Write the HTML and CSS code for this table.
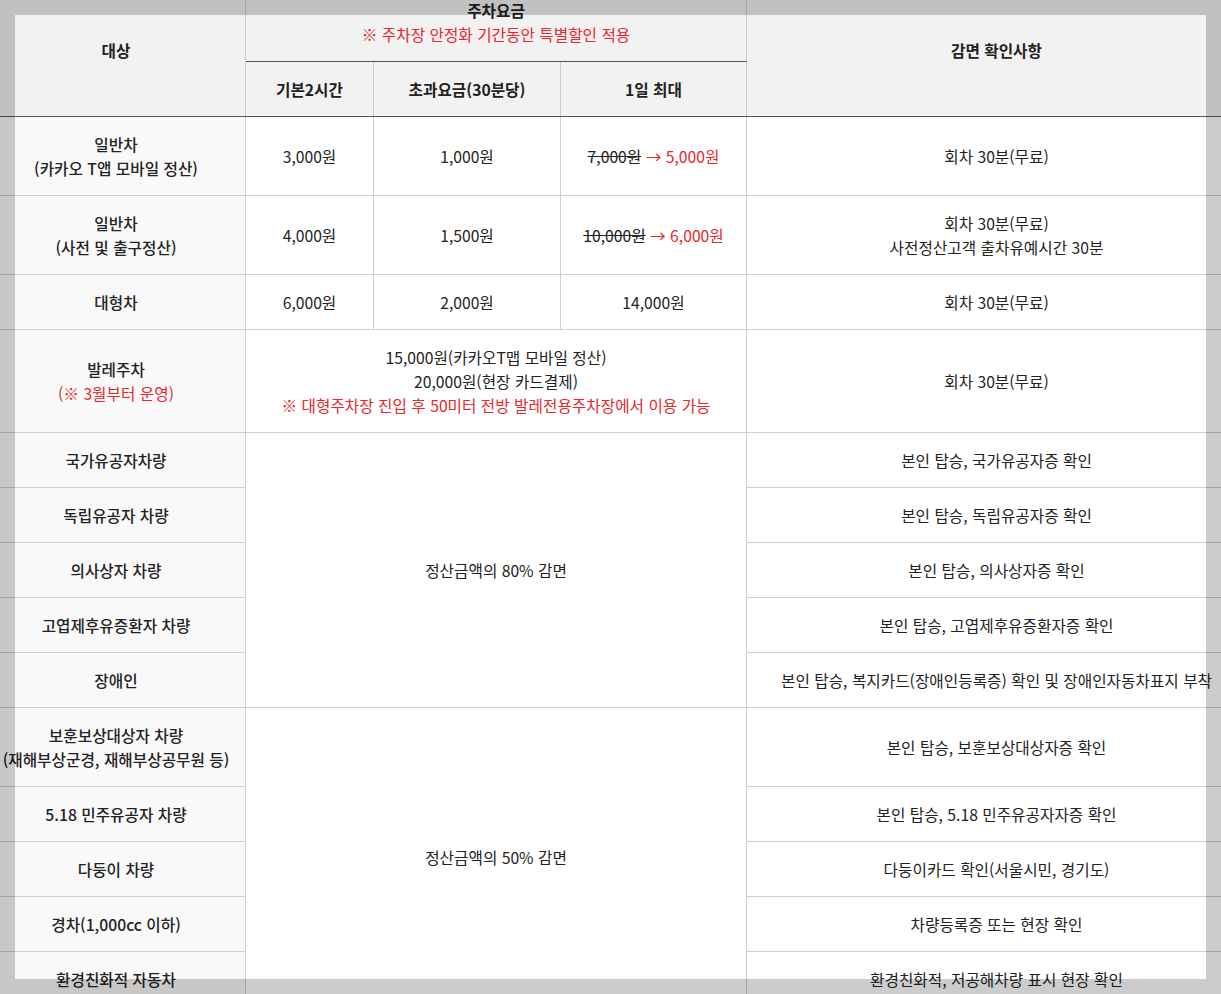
FILE: index.html
```html
<!DOCTYPE html>
<html lang="ko">
<head>
<meta charset="utf-8">
<title>주차요금</title>
<link rel="stylesheet" href="styles.css">
</head>
<body>
<div class="wrap">
<table class="fee">
<colgroup>
<col class="c1"><col class="c2"><col class="c3"><col class="c4"><col class="c5">
</colgroup>
<thead>
<tr>
<th rowspan="2" class="hd-end">대상</th>
<th colspan="3" class="hd-group">주차요금<br><span class="red normal">※ 주차장 안정화 기간동안 특별할인 적용</span></th>
<th rowspan="2" class="hd-end">감면 확인사항</th>
</tr>
<tr>
<th class="hd-end">기본2시간</th>
<th class="hd-end">초과요금(30분당)</th>
<th class="hd-end">1일 최대</th>
</tr>
</thead>
<tbody>
<tr>
<th>일반차<br>(카카오 T앱 모바일 정산)</th>
<td>3,000원</td>
<td>1,000원</td>
<td><s>7,000원</s> <span class="red">→ 5,000원</span></td>
<td>회차 30분(무료)</td>
</tr>
<tr>
<th>일반차<br>(사전 및 출구정산)</th>
<td>4,000원</td>
<td>1,500원</td>
<td><s>10,000원</s> <span class="red">→ 6,000원</span></td>
<td>회차 30분(무료)<br>사전정산고객 출차유예시간 30분</td>
</tr>
<tr>
<th>대형차</th>
<td>6,000원</td>
<td>2,000원</td>
<td>14,000원</td>
<td>회차 30분(무료)</td>
</tr>
<tr>
<th>발레주차<br><span class="red normal">(※ 3월부터 운영)</span></th>
<td colspan="3">15,000원(카카오T맵 모바일 정산)<br>20,000원(현장 카드결제)<br><span class="red">※ 대형주차장 진입 후 50미터 전방 발레전용주차장에서 이용 가능</span></td>
<td>회차 30분(무료)</td>
</tr>
<tr>
<th>국가유공자차량</th>
<td colspan="3" rowspan="5">정산금액의 80% 감면</td>
<td>본인 탑승, 국가유공자증 확인</td>
</tr>
<tr>
<th>독립유공자 차량</th>
<td>본인 탑승, 독립유공자증 확인</td>
</tr>
<tr>
<th>의사상자 차량</th>
<td>본인 탑승, 의사상자증 확인</td>
</tr>
<tr>
<th>고엽제후유증환자 차량</th>
<td>본인 탑승, 고엽제후유증환자증 확인</td>
</tr>
<tr>
<th>장애인</th>
<td>본인 탑승, 복지카드(장애인등록증) 확인 및 장애인자동차표지 부착</td>
</tr>
<tr>
<th>보훈보상대상자 차량<br>(재해부상군경, 재해부상공무원 등)</th>
<td colspan="3" rowspan="5">정산금액의 50% 감면</td>
<td>본인 탑승, 보훈보상대상자증 확인</td>
</tr>
<tr>
<th>5.18 민주유공자 차량</th>
<td>본인 탑승, 5.18 민주유공자자증 확인</td>
</tr>
<tr>
<th>다둥이 차량</th>
<td>다둥이카드 확인(서울시민, 경기도)</td>
</tr>
<tr>
<th>경차(1,000cc 이하)</th>
<td>차량등록증 또는 현장 확인</td>
</tr>
<tr>
<th>환경친화적 자동차</th>
<td>환경친화적, 저공해차량 표시 현장 확인</td>
</tr>
</tbody>
</table>
</div>
<div class="frame"></div>
</body>
</html>
```

FILE: styles.css
```css
html, body {
  margin: 0;
  padding: 0;
  overflow: hidden;
  background: #fff;
}
body {
  font-family: "Noto Sans CJK KR", "Noto Sans", sans-serif;
  font-size: 15.7px;
  color: #222;
}
.wrap {
  margin: -18px 0 0 -14px;
  width: 1260px;
}
.fee {
  border-collapse: collapse;
  table-layout: fixed;
  width: 1260px;
}
.c1 { width: 259px; }
.c2 { width: 128px; }
.c3 { width: 187px; }
.c4 { width: 186px; }
.c5 { width: 500px; }
.fee th,
.fee td {
  padding: 16px 0 14px;
  height: 24px;
  line-height: 24px;
  text-align: center;
  vertical-align: middle;
  border: 1px solid #cfcfcf;
  white-space: nowrap;
}
.fee thead th {
  background: #f2f2f2;
  font-weight: 700;
}
.fee thead .hd-group,
.fee thead .hd-end {
  border-bottom: 1px solid #555;
}
.fee tbody th {
  background: #f9f9f9;
  font-weight: 500;
}
.fee tbody td {
  background: #fff;
  font-weight: 400;
}
.red { color: #e8262c; }
.normal { font-weight: 400; }
s { text-decoration: line-through; }
.frame {
  position: fixed;
  inset: 0;
  border: 15px solid rgba(0, 0, 0, 0.2);
  pointer-events: none;
}
```
